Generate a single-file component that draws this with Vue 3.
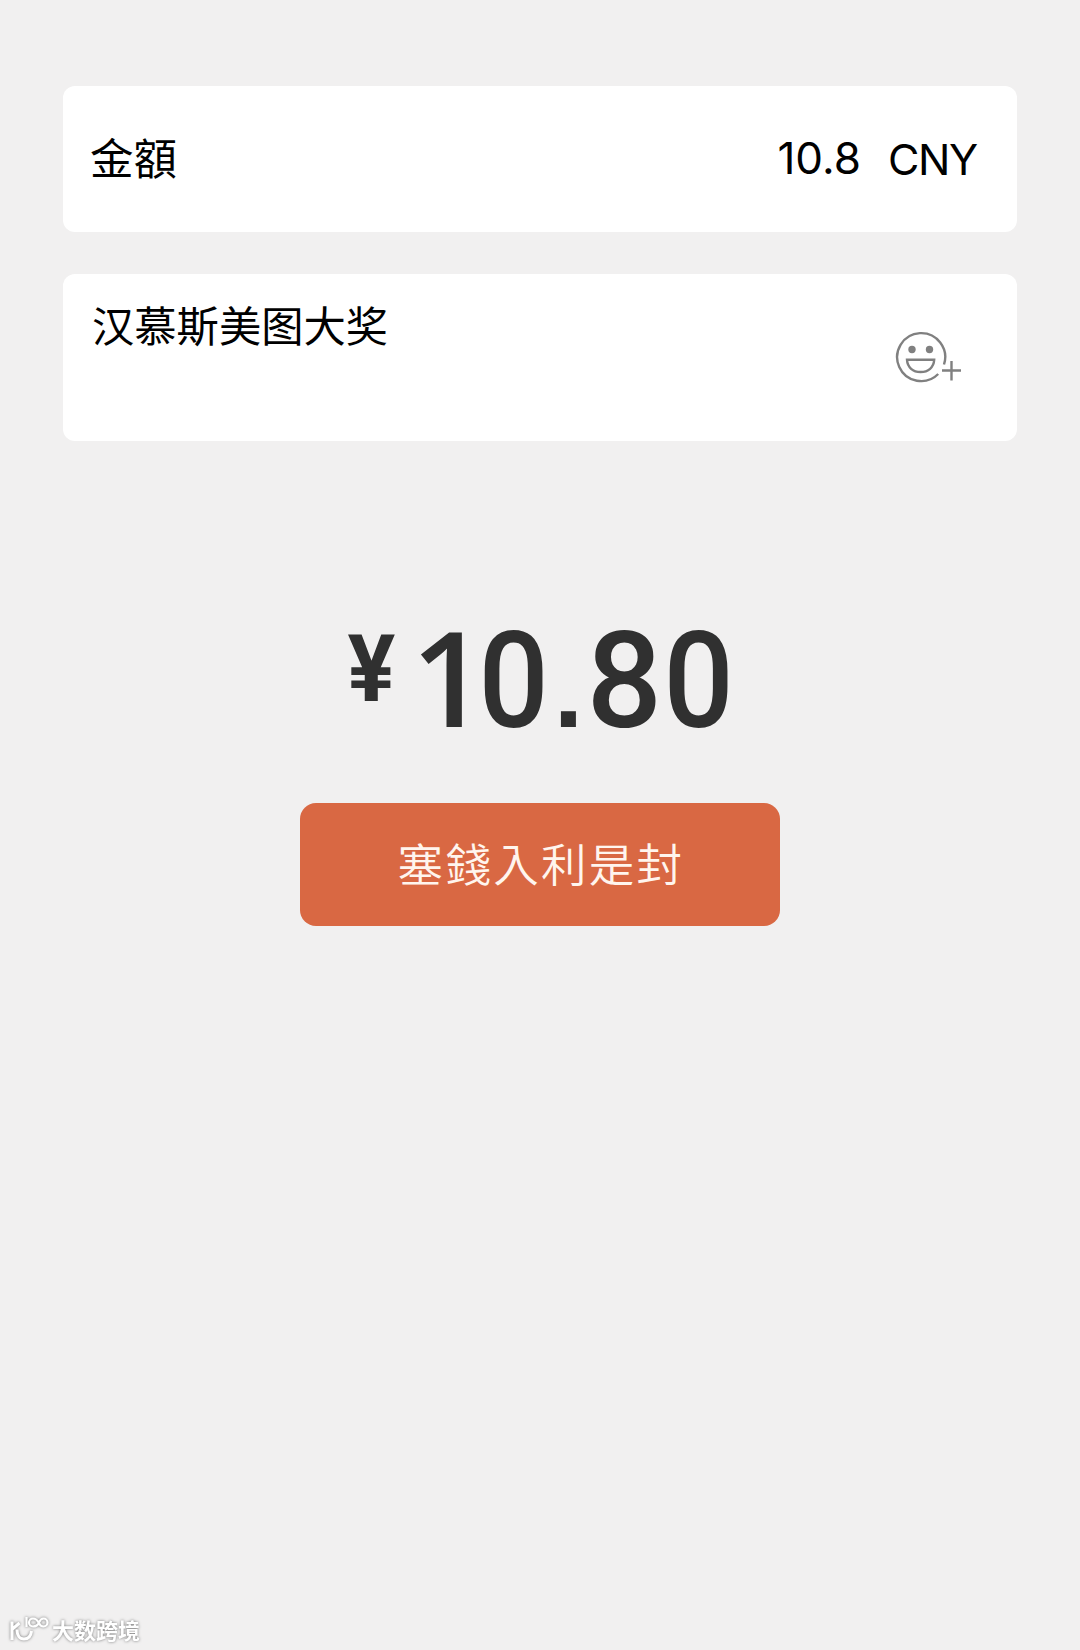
<script setup>
const amount = '10.8'
const currency = 'CNY'
const message = '汉慕斯美图大奖'
const total = '10.80'
const glyphClass = (ch) => ({ '.': 'dot', 1: 'one', 8: 'eight' })[ch] ?? 'zero'
</script>

<template>
  <main class="page">
    <section class="card amount-card">
      <span class="label">金額</span>
      <span class="amount">{{ amount }}</span>
      <span class="currency">{{ currency }}</span>
    </section>

    <section class="card message-card">
      <span class="message">{{ message }}</span>
      <svg class="emoji" width="68" height="54" viewBox="0 0 68 54" fill="none" stroke="#808080" stroke-width="2.4">
        <path d="M49 33.5A24 24 0 1 0 43.2 43" />
        <circle cx="17" cy="18.5" r="3.7" fill="#808080" stroke="none" />
        <circle cx="34.5" cy="18.5" r="3.7" fill="#808080" stroke="none" />
        <path d="M12 28.8H39.2C38.8 36.5 33.2 41 25.6 41S12.4 36.5 12 28.8Z" />
        <path d="M47 39.5H66M56.5 30V49.5" />
      </svg>
    </section>

    <div class="total">
      <span class="yen">¥</span>
      <div class="digits">
        <span v-for="(ch, i) in total" :key="i" class="digit" :class="glyphClass(ch)">{{ ch }}</span>
      </div>
    </div>

    <button class="submit" type="button">塞錢入利是封</button>

    <footer class="watermark">
      <svg class="mark" width="42" height="30" viewBox="0 0 42 30" fill="none" stroke="#fff" stroke-width="3">
        <path d="M3 6.5V25M3.5 14L10.5 8M8 14.5C8 20 10.5 24 15 24C19.5 24 22 20.5 22.5 16" />
        <path d="M17.5 2V12M30 7.5C31 5 32.5 3.5 34.5 3.5A4 4 0 0 1 34.5 11.5C32 11.5 30.5 9.5 29.5 7.5C28 4.5 26.5 3.5 24 3.5A4 4 0 0 0 24 11.5C27 11.5 29 10 30 7.5" stroke-width="2.2" />
      </svg>
      <span>大数跨境</span>
    </footer>
  </main>
</template>

<style>
body {
  background: #f1f0f0;
}
</style>

<style scoped>
.page {
  box-sizing: border-box;
  display: flex;
  flex-direction: column;
  align-items: center;
  width: 1080px;
  height: 1650px;
  padding: 86px 63px 0;
  overflow: hidden;
  background: #f1f0f0;
  font-family: Inter, "Noto Sans CJK TC", sans-serif;
  color: #000;
}

.card {
  box-sizing: border-box;
  display: flex;
  width: 954px;
  border-radius: 12px;
  background: #fff;
}

.amount-card {
  align-items: center;
  height: 146px;
  padding: 0 40px 0 27px;
}

.label {
  flex: 1;
  margin-bottom: 4px;
  font-family: "Noto Sans CJK TC", sans-serif;
  font-size: 43.5px;
  line-height: 60px;
}

.amount {
  margin: 0 27px 3px 0;
  font-size: 44px;
  line-height: 60px;
}

.currency {
  font-size: 43px;
  letter-spacing: -1.3px;
  line-height: 60px;
}

.message-card {
  justify-content: space-between;
  height: 167px;
  margin-top: 42px;
  padding: 20px 54px 0 29px;
}

.message {
  font-family: "Noto Sans CJK SC", sans-serif;
  font-size: 42.3px;
  line-height: 60px;
}

.emoji {
  margin-top: 37px;
}

.total {
  display: flex;
  align-self: flex-start;
  height: 140px;
  margin: 171px 0 0 278px;
  color: #303030;
  font-family: Roboto, sans-serif;
}

.yen {
  width: 61px;
  font-size: 92px;
  font-weight: 700;
  line-height: 116px;
  text-align: center;
  transform: scaleX(0.97);
}

.digits {
  display: flex;
  align-items: baseline;
  height: 140px;
  margin-top: -6px;
}

.digit {
  width: 74.3px;
  font-size: 133px;
  font-weight: 500;
  line-height: 140px;
  text-align: center;
}

.zero {
  transform: scaleX(0.93);
}

.one {
  font-family: "Open Sans", sans-serif;
  font-weight: 600;
  transform: translateX(9px);
}

.dot {
  width: 36px;
  font-family: "Liberation Sans", sans-serif;
  font-size: 106px;
  font-weight: 700;
}

.submit {
  width: 480px;
  height: 123px;
  margin-top: 51px;
  padding: 0 0 5px 2px;
  border: 0;
  border-radius: 16px;
  background: #d96843;
  color: #fff5ee;
  font-family: "Noto Sans CJK TC", sans-serif;
  font-size: 45.5px;
  font-weight: 350;
  letter-spacing: 2.3px;
}

.watermark {
  display: flex;
  align-self: flex-start;
  align-items: center;
  gap: 1px;
  height: 40px;
  margin: auto 0 0 -54px;
  color: #fff;
  font-family: "Noto Sans CJK SC", sans-serif;
  font-size: 22px;
  font-weight: 700;
  line-height: 36px;
  filter: drop-shadow(0 0 1.5px #777);
}

.watermark span {
  margin-bottom: 2px;
}
</style>
